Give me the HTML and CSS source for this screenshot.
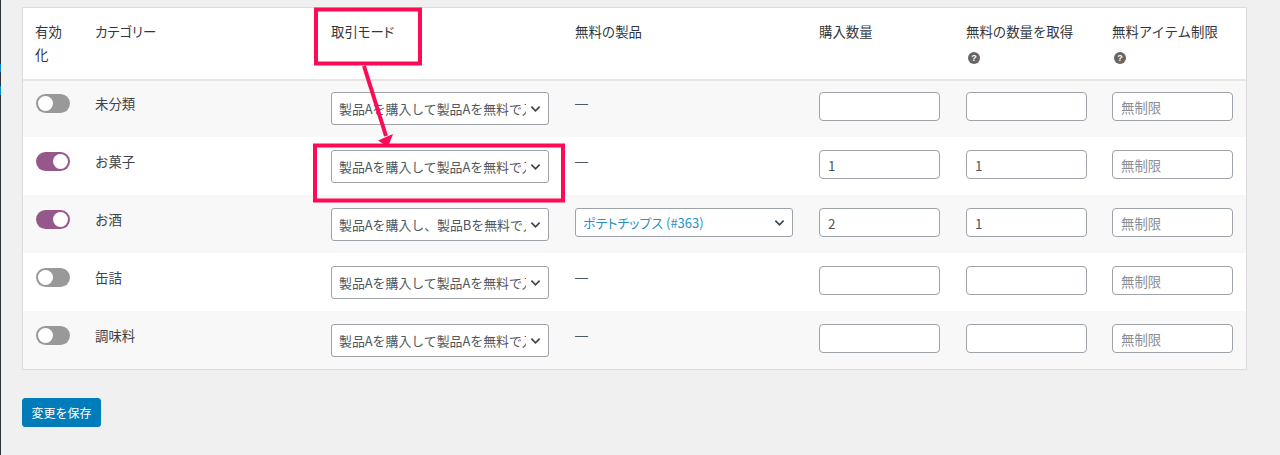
FILE: index.html
```html
<!DOCTYPE html>
<html lang="ja">
<head>
<meta charset="utf-8">
<title>無料アイテム設定</title>
<link rel="stylesheet" href="styles.css">
</head>
<body>
<div class="sidebar"><span class="sidebar-mark"></span><span class="sidebar-mark second"></span></div>
<main class="content">
  <table class="rules">
    <colgroup>
      <col class="c-en"><col class="c-cat"><col class="c-mode"><col class="c-free"><col class="c-buy"><col class="c-get"><col class="c-lim">
    </colgroup>
    <thead>
      <tr>
        <th class="first">有効化</th>
        <th class="palt">カテゴリー</th>
        <th class="palt">取引モード</th>
        <th>無料の製品</th>
        <th>購入数量</th>
        <th>無料の数量を取得<span class="help">?</span></th>
        <th>無料アイテム制限<span class="help">?</span></th>
      </tr>
    </thead>
    <tbody>
      <tr class="odd">
        <td><span class="toggle"></span></td>
        <td class="cat">未分類</td>
        <td><div class="select"><span class="select-text">製品Aを購入して製品Aを無料で入手</span><svg class="chev" viewBox="0 0 12 8"><path d="M1.5 1.5 6 6l4.500-4.500"/></svg></div></td>
        <td class="dash">—</td>
        <td><input class="num" type="text"></td>
        <td><input class="num" type="text"></td>
        <td><input class="num" type="text" placeholder="無制限"></td>
      </tr>
      <tr>
        <td><span class="toggle on"></span></td>
        <td class="cat">お菓子</td>
        <td><div class="select"><span class="select-text">製品Aを購入して製品Aを無料で入手</span><svg class="chev" viewBox="0 0 12 8"><path d="M1.5 1.5 6 6l4.500-4.500"/></svg></div></td>
        <td class="dash">—</td>
        <td><input class="num" type="text" value="1"></td>
        <td><input class="num" type="text" value="1"></td>
        <td><input class="num" type="text" placeholder="無制限"></td>
      </tr>
      <tr class="odd">
        <td><span class="toggle on"></span></td>
        <td class="cat">お酒</td>
        <td><div class="select"><span class="select-text">製品Aを購入し、製品Bを無料で入手</span><svg class="chev" viewBox="0 0 12 8"><path d="M1.5 1.5 6 6l4.500-4.500"/></svg></div></td>
        <td><div class="select product"><span class="select-text link">ポテトチップス (#363)</span><svg class="chev" viewBox="0 0 12 8"><path d="M1.5 1.5 6 6l4.500-4.500"/></svg></div></td>
        <td><input class="num" type="text" value="2"></td>
        <td><input class="num" type="text" value="1"></td>
        <td><input class="num" type="text" placeholder="無制限"></td>
      </tr>
      <tr>
        <td><span class="toggle"></span></td>
        <td class="cat">缶詰</td>
        <td><div class="select"><span class="select-text">製品Aを購入して製品Aを無料で入手</span><svg class="chev" viewBox="0 0 12 8"><path d="M1.5 1.5 6 6l4.500-4.500"/></svg></div></td>
        <td class="dash">—</td>
        <td><input class="num" type="text"></td>
        <td><input class="num" type="text"></td>
        <td><input class="num" type="text" placeholder="無制限"></td>
      </tr>
      <tr class="odd">
        <td><span class="toggle"></span></td>
        <td class="cat">調味料</td>
        <td><div class="select"><span class="select-text">製品Aを購入して製品Aを無料で入手</span><svg class="chev" viewBox="0 0 12 8"><path d="M1.5 1.5 6 6l4.500-4.500"/></svg></div></td>
        <td class="dash">—</td>
        <td><input class="num" type="text"></td>
        <td><input class="num" type="text"></td>
        <td><input class="num" type="text" placeholder="無制限"></td>
      </tr>
    </tbody>
  </table>
  <button class="save" type="button">変更を保存</button>
</main>
<svg class="notes" viewBox="0 0 1280 455" aria-hidden="true">
  <rect class="note" x="316" y="9.500" width="104" height="54"/>
  <rect class="note" x="315" y="145.500" width="248" height="55"/>
  <path class="note-line" d="M364 66 386 136"/>
  <path class="note-head" d="M393 134 378 140.500 388 147Z"/>
</svg>
</body>
</html>
```
FILE: styles.css
```css
* { box-sizing: border-box; }
html, body { margin: 0; height: 455px; overflow: hidden; }
body {
  background: #f0f0f0;
  font-family: "Noto Sans CJK JP", "Noto Sans", sans-serif;
  color: #3c434a;
  font-size: 13px;
  display: flex;
  position: relative;
}
.sidebar { width: 1px; background: #2c3338; height: 100%; position: relative; }
.sidebar-mark { position: absolute; left: 0; top: 64px; width: 1px; height: 8px; background: #0a8ad0; }
.sidebar-mark.second { top: 86px; height: 9px; }
.content { padding: 7px 0 0 21px; flex: 0 0 auto; }
.rules {
  width: 1225px;
  table-layout: fixed;
  border-collapse: separate;
  border-spacing: 0;
  background: #fff;
  border: 1px solid #dcdcde;
}
.c-en { width: 59px; }
.c-cat { width: 236px; }
.c-mode { width: 244px; }
.c-free { width: 244px; }
.c-buy { width: 147px; }
.c-get { width: 146px; }
.c-lim { width: 147px; }
thead th {
  height: 71px;
  padding: 12px 13px 0;
  text-align: left;
  vertical-align: top;
  font-weight: 400;
  font-size: 13.400px;
  line-height: 23px;
  color: #32373c;
}
thead th.first { padding-left: 12px; }
th.palt, .select-text.link { font-feature-settings: "palt"; }
tbody td { height: 58px; padding: 13px 13px 0; vertical-align: top; }
tbody tr.odd td { background: #f8f8f9; }
tbody tr:first-child td { box-shadow: inset 0 2px 0 #e6e6e7; }
tbody td.cat { padding-top: 14px; font-size: 13.400px; line-height: 20px; }
tbody td.dash { padding-top: 13px; font: 13px/24px "Liberation Sans", sans-serif; color: #50575e; }
.help {
  display: block;
  width: 12px;
  height: 12px;
  margin: 9px 0 0 2px;
  border-radius: 50%;
  background: #666;
  color: #fff;
  font: 700 9px/12px "Liberation Sans", sans-serif;
  text-align: center;
}
.toggle {
  display: block;
  position: relative;
  width: 34px;
  height: 19px;
  margin: 2px 0 0 -0.500px;
  border-radius: 10px;
  background: #999;
}
.toggle::after {
  content: "";
  position: absolute;
  left: 2px;
  top: 2px;
  width: 15px;
  height: 15px;
  border-radius: 50%;
  background: #fff;
}
.toggle.on { background: #96588a; }
.toggle.on::after { left: 17px; }
.select {
  display: flex;
  align-items: center;
  width: 218px;
  height: 33px;
  padding: 0 7px 0 7px;
  background: #fff;
  border: 1px solid #9da3a8;
  border-radius: 3px;
}
.select.product { height: 29px; }
.select-text {
  flex: 1 1 auto;
  min-width: 0;
  overflow: hidden;
  white-space: nowrap;
  font-size: 12.900px;
  line-height: 20px;
  color: #50575e;
}
.select-text.link { color: #2a8fc4; font-size: 13px; }
.chev { flex: 0 0 auto; width: 11px; height: 8px; margin-left: 4px; }
.chev path { fill: none; stroke: #3c434a; stroke-width: 1.800; }
.num {
  display: block;
  width: 121px;
  height: 29px;
  padding: 0 8px;
  background: #fff;
  border: 1px solid #9da3a8;
  border-radius: 4px;
  font: 13.400px "Noto Sans CJK JP", "Noto Sans", sans-serif;
  color: #50575e;
}
.num::placeholder { color: #8a8f94; opacity: 1; }
.save {
  display: block;
  margin-top: 28px;
  width: 79px;
  height: 29px;
  padding: 0;
  background: #007cba;
  border: 1px solid #007cba;
  border-radius: 3px;
  color: #fff;
  font: 12px "Noto Sans CJK JP", "Noto Sans", sans-serif;
}
.notes { position: absolute; left: 0; top: 0; width: 1280px; height: 455px; pointer-events: none; }
.note { fill: none; stroke: #ff0a55; stroke-width: 4; }
.note-line { fill: none; stroke: #ff0a55; stroke-width: 4; }
.note-head { fill: #ff0a55; }
```
